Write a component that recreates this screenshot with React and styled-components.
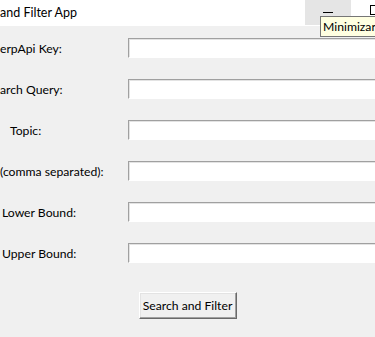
import { Fragment } from 'react'
import styled, { createGlobalStyle } from 'styled-components'

const GlobalStyle = createGlobalStyle`
  html, body {
    margin: 0;
    padding: 0;
    background: #f0f0f0;
  }
  body {
    font-family: Lato, "Noto Sans", sans-serif;
    font-size: 12.2px;
    color: #000;
  }
`

// window chrome
const Window = styled.div`
  width: 375px;
  height: 337px;
  overflow: hidden;
  position: relative;
  background: #f0f0f0;
`

const TitleBar = styled.div`
  display: grid;
  grid-template-columns: 305px 46px 46px 46px;
  height: 26px;
  background: #fff;
  overflow: hidden;
`

const Title = styled.div`
  display: flex;
  align-items: center;
  white-space: nowrap;
  font-size: 12.5px;
  padding-bottom: 2px;
`

const CaptionBtn = styled.div`
  display: flex;
  align-items: center;
  justify-content: center;
  height: 25px;
  background: ${p => (p.$hover ? '#e5e5e5' : 'transparent')};
`

const MinGlyph = styled.span`
  width: 10px;
  height: 1px;
  background: #000;
  margin-top: -1px;
`

const MaxGlyph = styled.span`
  width: 8px;
  height: 8px;
  border: 1px solid #000;
  margin-top: -6px;
  margin-left: 1px;
`

const Tooltip = styled.div`
  position: absolute;
  left: 320px;
  top: 16px;
  height: 19px;
  padding: 0 4px 0 2px;
  display: flex;
  align-items: center;
  background: #ffffe1;
  border: 1px solid #767676;
  white-space: nowrap;
`

// form
const Form = styled.div`
  display: grid;
  grid-template-columns: 128px 1fr;
  grid-auto-rows: 20px;
  row-gap: 21px;
  padding-top: 12px;
`

const Label = styled.div`
  display: flex;
  align-items: center;
  padding-left: ${p => p.$indent || 0}px;
  white-space: nowrap;
`

const Entry = styled.input`
  box-sizing: border-box;
  width: 260px;
  height: 20px;
  margin: 0;
  background: #fff;
  border: 1px solid;
  border-color: #a0a0a0 #fff #fff #a0a0a0;
  box-shadow: inset 1px 1px 0 #e3e3e3;
  outline: none;
`

const Footer = styled.div`
  display: flex;
  justify-content: center;
  padding-top: 29px;
`

const Button = styled.button`
  box-sizing: border-box;
  width: 98px;
  height: 27px;
  padding: 0 0 1px;
  font: inherit;
  color: #000;
  background: #f0f0f0;
  border: 1px solid;
  border-color: #fff #696969 #696969 #fff;
  box-shadow: inset -1px -1px 0 #a0a0a0, inset 1px 1px 0 #e3e3e3;
`

const fields = [
  { label: 'erpApi Key:', indent: 0 },
  { label: 'arch Query:', indent: 0 },
  { label: 'Topic:', indent: 10 },
  { label: '(comma separated):', indent: 0 },
  { label: 'Lower Bound:', indent: 2 },
  { label: 'Upper Bound:', indent: 2 },
]

export default function App() {
  return (
    <Window>
      <GlobalStyle />
      <TitleBar>
        <Title>and Filter App</Title>
        <CaptionBtn $hover><MinGlyph /></CaptionBtn>
        <CaptionBtn><MaxGlyph /></CaptionBtn>
        <CaptionBtn />
      </TitleBar>
      <Form>
        {fields.map(f => (
          <Fragment key={f.label}>
            <Label $indent={f.indent}>{f.label}</Label>
            <div><Entry /></div>
          </Fragment>
        ))}
      </Form>
      <Footer>
        <Button>Search and Filter</Button>
      </Footer>
      <Tooltip>Minimizar</Tooltip>
    </Window>
  )
}
